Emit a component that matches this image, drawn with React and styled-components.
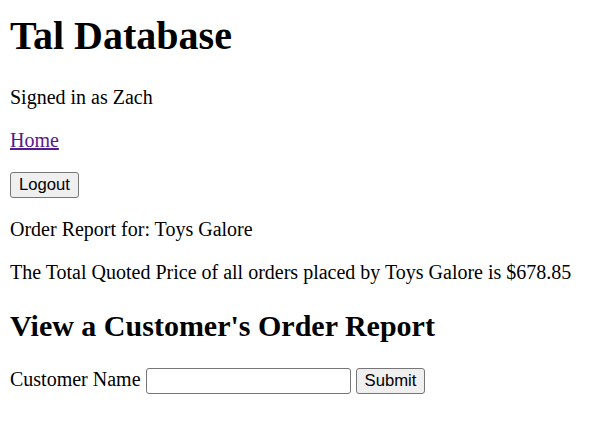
import React from "react";
import styled, { createGlobalStyle } from "styled-components";

// reference was captured at 125% zoom, so every default size is scaled by 1.25
const GlobalStyle = createGlobalStyle`
  body {
    margin: 12px 10px 10px;
    font-family: "Liberation Serif", "Times New Roman", serif;
    font-size: 20px;
    color: #000;
    background: #fff;
  }
`;

const Title = styled.h1`
  font-size: 40px;
  font-weight: bold;
  margin: 0 0 26.8px;
`;

const SubTitle = styled.h2`
  font-size: 30px;
  font-weight: bold;
  margin: 24.9px 0;
`;

const Line = styled.p`
  margin: 20px 0;
`;

const NavLink = styled.a`
  color: #551a8b;
  text-decoration: underline;
`;

const Button = styled.button`
  font-family: "Liberation Sans", Arial, sans-serif;
  font-size: 16.67px;
  height: 26px;
  padding: 1px 8px;
  border: 1px solid #767676;
  border-radius: 3px;
  background: #efefef;
  color: #000;
  vertical-align: baseline;
`;

const TextInput = styled.input`
  box-sizing: border-box;
  font-family: "Liberation Sans", Arial, sans-serif;
  font-size: 16.67px;
  width: 205px;
  height: 26px;
  padding: 1px 3px;
  border: 1px solid #767676;
  border-radius: 3px;
`;

const App = () => (
  <>
    <GlobalStyle />
    <Title>Tal Database</Title>
    <Line>Signed in as Zach</Line>
    <Line>
      <NavLink href="#">Home</NavLink>
    </Line>
    <Line>
      <Button>Logout</Button>
    </Line>
    <Line>Order Report for: Toys Galore</Line>
    <Line>The Total Quoted Price of all orders placed by Toys Galore is $678.85</Line>
    <SubTitle>View a Customer's Order Report</SubTitle>
    <form onSubmit={(e) => e.preventDefault()}>
      Customer Name <TextInput type="text" /> <Button type="submit">Submit</Button>
    </form>
  </>
);

export default App;
